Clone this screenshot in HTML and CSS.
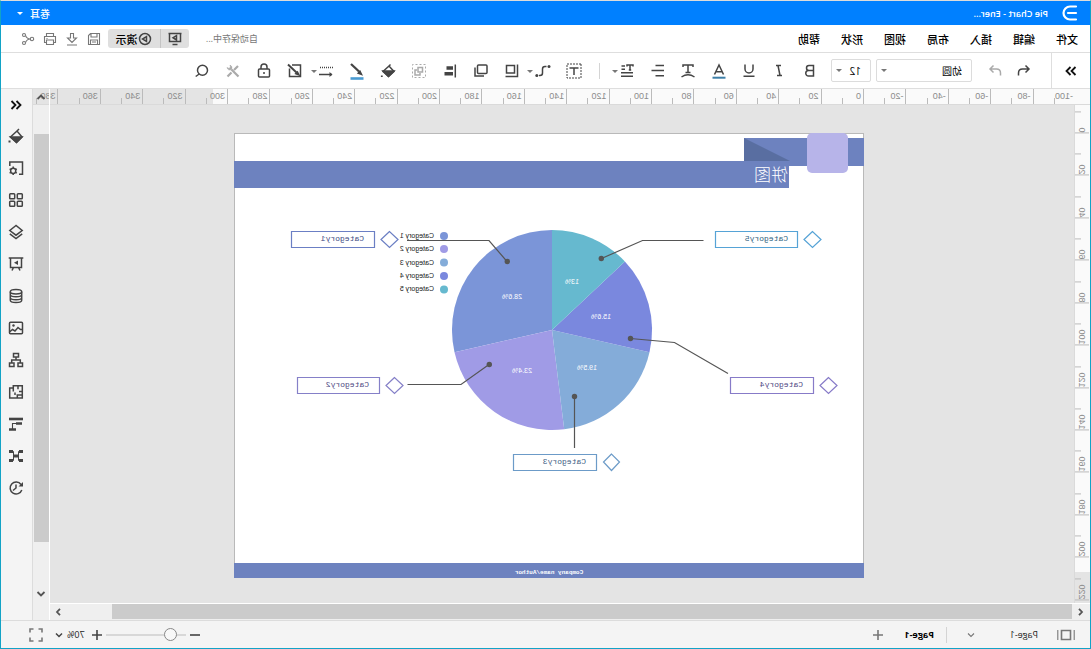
FILE: index.html
```html
<!DOCTYPE html>
<html lang="zh-CN">
<head>
<meta charset="utf-8">
<title>Pie Chart</title>
<link rel="stylesheet" href="styles.css">
</head>
<body>
<div class="app">
  <header class="titlebar">
    <svg class="logo" viewBox="0 0 16 16" width="16" height="16"><path d="M2 1.500h6a6.500 6.500 0 0 1 0 13H2M2 8h8" fill="none" stroke="#fff" stroke-width="2.200" stroke-linecap="round"/></svg>
    <span class="doc-name">Pie Chart - Ener...</span>
    <button class="user">卷耳 <span class="caret caret-light"></span></button>
  </header>

  <div class="menubar">
    <nav class="menus">
      <button>文件</button><button>编辑</button><button>插入</button><button>布局</button><button>视图</button><button>形状</button><button>帮助</button>
    </nav>
    <span class="saving">自动保存中...</span>
    <div class="present">
      <button class="present-screen" aria-label="放映"><svg class="ico" viewBox="0 0 14 14" width="14" height="14"><path d="M0.500 1.500h13M1.500 1.500v8h11v-8M4.500 12.500h5" /><path d="M5.500 3.500v4.500L9 5.700z"/></svg></button>
      <button class="present-play"><svg class="ico" viewBox="0 0 14 14" width="14" height="14"><circle cx="7" cy="7" r="5.500"/><path d="M5.500 4.500v5L9.500 7z"/></svg>演示</button>
    </div>
    <div class="quick">
      <button aria-label="保存"><svg class="ico soft" viewBox="0 0 14 14" width="14" height="14"><path d="M1.500 1.500h9l2 2v9h-11zM4 1.500v3.500h6v-3.500M3.500 12.500V8h7v4.500M5 10h4"/></svg></button>
      <button aria-label="下载"><svg class="ico soft" viewBox="0 0 14 14" width="14" height="14"><path d="M5.500 1.500h3V6h3L7 10.500 2.500 6h3zM2 13h10"/></svg></button>
      <button aria-label="打印"><svg class="ico soft" viewBox="0 0 14 14" width="14" height="14"><path d="M3.500 4.500v-3h7v3M3.500 10.500h-2v-6h11v6h-2M3.500 8h7v4.500h-7zM9.500 6.500h1"/></svg></button>
      <button aria-label="分享"><svg class="ico soft" viewBox="0 0 14 14" width="14" height="14"><circle cx="3" cy="7" r="1.700"/><circle cx="11" cy="3" r="1.500"/><circle cx="11" cy="11" r="1.500"/><path d="M4.700 7Q8 7 9.500 3.500M4.700 7Q8 7 9.500 10.500"/></svg></button>
    </div>
  </div>

  <div class="toolbar">
    <button class="expand" aria-label="展开"><svg class="ico heavy" viewBox="0 0 14 14" width="14" height="14"><path d="M2.500 3l4 4-4 4M7.500 3l4 4-4 4"/></svg></button>
    <button class="tool" aria-label="撤销"><svg class="ico" viewBox="0 0 14 14" width="14" height="14"><path d="M5.500 1.500L2 5l3.500 3.500M2 5h6.500Q12.500 5 12.500 9v2.500"/></svg></button>
    <button class="tool" aria-label="重做"><svg class="ico faint" viewBox="0 0 14 14" width="14" height="14"><path d="M8.500 1.500L12 5 8.500 8.500M12 5H5.500Q1.500 5 1.500 9v2.500"/></svg></button>
    <div class="pick pick-font"><select aria-label="字体"><option>幼圆</option></select><span class="caret"></span></div>
    <div class="pick pick-size"><select aria-label="字号"><option>12</option></select><span class="caret"></span></div>
    <div class="tools-text">
      <button aria-label="粗体"><svg class="ico" viewBox="0 0 16 16" width="16" height="16"><path d="M4.500 2.500h4.500a2.400 2.400 0 0 1 0 5H4.500zM4.500 7.500h5a2.500 2.500 0 0 1 0 5.500h-5z"/></svg></button>
      <button aria-label="斜体"><svg class="ico" viewBox="0 0 16 16" width="16" height="16"><path d="M6 2.500h5M5 12.500h5M9 2.500l-2 10"/></svg></button>
      <button aria-label="下划线"><svg class="ico" viewBox="0 0 16 16" width="16" height="16"><path d="M4 1.500V6a4 4 0 0 0 8 0V1.500M2.500 13.300h11"/></svg></button>
      <button aria-label="字体颜色"><svg class="ico" viewBox="0 0 16 16" width="16" height="16"><path d="M3.500 11.500L8 2l4.500 9.500M5 8.700h6"/><path d="M1.500 14.700h13" stroke="#3d7fa8" stroke-width="2"/></svg></button>
      <button aria-label="弧形文字"><svg class="ico" viewBox="0 0 16 16" width="16" height="16"><path d="M3 4V2h10v2M8 2v7.500M5.500 9.500h5M1.500 14q6.500-4.500 13 0"/></svg></button>
      <button aria-label="对齐"><svg class="ico" viewBox="0 0 16 16" width="16" height="16"><path d="M2 2.500h8.500M2 7.500h12.500M2 12.800h8.500"/></svg></button>
      <button class="has-caret" aria-label="行距"><svg class="ico" viewBox="0 0 16 16" width="16" height="16"><path d="M2 3.500V2h6v1.500M5 2v5M3.800 7h2.400M10 3h3.500M10 6.200h3.500M2 9.700h12M2 13.300h12"/></svg><span class="caret"></span></button>
    </div>
    <span class="rule"></span>
    <div class="tools-shape">
      <button aria-label="文本框"><svg class="ico" viewBox="0 0 16 16" width="16" height="16"><path d="M1 1h14v14H1z" stroke-dasharray="2 1" stroke-width="1"/><path d="M3.500 5h9M8 5v7"/></svg></button>
      <button class="has-caret" aria-label="连接线"><svg class="ico" viewBox="0 0 16 16" width="16" height="16"><path d="M4.500 3.500H6q2.500 0 2.500 2.500v4q0 2.500 2.500 2.500h1"/><circle cx="2" cy="3.500" r="1.500" fill="#444" stroke="none"/><circle cx="14.200" cy="12.500" r="1.500" fill="#444" stroke="none"/></svg><span class="caret"></span></button>
      <button aria-label="阴影"><svg class="ico" viewBox="0 0 16 16" width="16" height="16"><path d="M5.500 2.500h8v7.500h-8zM2.500 1.500v12h12"/></svg></button>
      <button aria-label="图层顺序"><svg class="ico" viewBox="0 0 16 16" width="16" height="16"><rect x="2" y="2" width="9.500" height="8.500" rx="1"/><path d="M14 4.500v8.500H5"/></svg></button>
      <button aria-label="对齐形状"><svg class="ico" viewBox="0 0 16 16" width="16" height="16"><path d="M2.700 1.500v13" stroke-width="1.500"/><path d="M5 5h6.500M5 10.800h8.500" stroke-width="3.500"/></svg></button>
      <button aria-label="组合"><svg class="ico faint" viewBox="0 0 16 16" width="16" height="16"><path d="M1.500 1.500h13v13h-13z" stroke-dasharray="2 2" stroke-width="1"/><path d="M4.500 4.500h4.500v4.500H4.500zM10 7h2v5H7v-2"/></svg></button>
      <button aria-label="填充"><svg class="ico" viewBox="0 0 16 16" width="16" height="16"><path d="M7 3l6 5.500-5.500 5L2 8.500zM5.500 1.500l2 2"/><path d="M2 8h11l-5.500 5.500z" fill="#444"/><path d="M14.200 12.500v1.500" stroke-width="1.800"/></svg></button>
      <button aria-label="线条颜色"><svg class="ico" viewBox="0 0 16 18" width="16" height="18"><path d="M14 2L6 9.500" stroke-width="2.300"/><path d="M3.500 12.300l1.500-3 1.800 1.800z" fill="#444"/><path d="M1.500 16.500h13" stroke="#4a9cd3" stroke-width="2.600"/></svg></button>
      <button class="has-caret" aria-label="线型"><svg class="ico" viewBox="0 0 16 16" width="16" height="16"><path d="M1 4.500h14" stroke-dasharray="1 1"/><path d="M15 11.500H2"/><path d="M4.500 9L1.500 11.500l3 2.500z" fill="#444" stroke="none"/></svg><span class="caret"></span></button>
      <button aria-label="编辑"><svg class="ico" viewBox="0 0 16 16" width="16" height="16"><path d="M11 2H2.500v11.500H13.500V5.500"/><path d="M15 1.500L6.500 9.500" stroke-width="2"/><path d="M4 12l1.500-3L7.300 10.800z" fill="#444"/></svg></button>
      <button aria-label="锁定"><svg class="ico" viewBox="0 0 16 16" width="16" height="16"><rect x="2.500" y="6" width="11" height="8" rx="1"/><path d="M5 6V4a3 3 0 0 1 6 0v2M8 9v2"/></svg></button>
      <button aria-label="工具"><svg class="ico faint" viewBox="0 0 16 16" width="16" height="16"><path d="M3 3l4 4M9.500 9.500l4 4" stroke-width="2.200"/><path d="M2.500 13.500l7-7" stroke-width="2.200"/><path d="M11 2q-3 1.500-1.500 4.500 3.500 1.500 4.500-2l-2 1-1.500-1.500z" fill="#aaa" stroke-width=".6"/></svg></button>
      <button aria-label="查找"><svg class="ico" viewBox="0 0 16 16" width="16" height="16"><circle cx="7.500" cy="7.200" r="5"/><path d="M10.800 11l3.500 2.500"/></svg></button>
    </div>
  </div>

  <main class="workspace">
    <div class="ruler-h">
      <div class="scale-h">
        <span>-100</span><span>-80</span><span>-60</span><span>-40</span><span>-20</span><span>0</span><span>20</span><span>40</span><span>60</span><span>80</span><span>100</span><span>120</span><span>140</span><span>160</span><span>180</span><span>200</span><span>220</span><span>240</span><span>260</span><span>280</span><span>300</span><span>320</span><span>340</span><span>360</span><span>380</span>
      </div>
    </div>
    <div class="ruler-v">
      <div class="scale-v">
        <span>0</span><span>20</span><span>40</span><span>60</span><span>80</span><span>100</span><span>120</span><span>140</span><span>160</span><span>180</span><span>200</span><span>220</span>
      </div>
    </div>

    <section class="canvas">
      <svg class="page" viewBox="227 133 630 446" width="630" height="446">
        <rect x="227.500" y="133.500" width="629" height="444" fill="#fff" stroke="#b9b9b9"/>
        <path d="M227 138h120v23h510v27H302v-22h-75z" fill="#6d82bf"/>
        <path d="M347 138v23h-46z" fill="#596ea1"/>
        <rect x="243" y="133" width="41" height="40" rx="5" fill="#b7b4e9"/>
        <text class="t-title" x="303" y="181">饼图</text>

        <path d="M539 330V230A100 100 0 0 1 636.500 352.300z" fill="#7b95d8"/>
        <path d="M539 330L636.500 352.300A100 100 0 0 1 526.800 429.300z" fill="#a09be6"/>
        <path d="M539 330L526.800 429.300A100 100 0 0 1 441.500 352.300z" fill="#84acd9"/>
        <path d="M539 330L441.500 352.300A100 100 0 0 1 466.100 261.500z" fill="#7a88de"/>
        <path d="M539 330L466.100 261.500A100 100 0 0 1 539 230z" fill="#66b9cf"/>

        <g class="t-value">
          <text x="579" y="299">28.6%</text>
          <text x="569" y="373">23.4%</text>
          <text x="504" y="370">19.5%</text>
          <text x="490" y="319">15.6%</text>
          <text x="519" y="284">13%</text>
        </g>

        <circle cx="647" cy="236" r="4" fill="#7b95d8"/>
        <circle cx="647" cy="249" r="4" fill="#a09be6"/>
        <circle cx="647" cy="262.500" r="4" fill="#84acd9"/>
        <circle cx="647" cy="276" r="4" fill="#7a88de"/>
        <circle cx="647" cy="289.500" r="4" fill="#66b9cf"/>
        <g class="t-legend">
          <text x="657" y="238">Category 1</text>
          <text x="657" y="251">Category 2</text>
          <text x="657" y="265">Category 3</text>
          <text x="657" y="278">Category 4</text>
          <text x="657" y="291">Category 5</text>
        </g>

        <g fill="none" stroke="#555" stroke-width="1.200">
          <path d="M684 240.500H602L584 261.500"/>
          <path d="M683.500 384.500H630L602 364.500"/>
          <path d="M516.500 396.500V448"/>
          <path d="M460.500 338.500L416.500 342.500L363 373.500"/>
          <path d="M489.500 258.500L448.500 240.500H387.500"/>
        </g>
        <g fill="#555">
          <circle cx="583.700" cy="261.500" r="2.700"/>
          <circle cx="601.700" cy="364.500" r="2.700"/>
          <circle cx="516.500" cy="396.500" r="2.700"/>
          <circle cx="460.500" cy="338.500" r="2.700"/>
          <circle cx="489.700" cy="258.500" r="2.700"/>
        </g>

        <g fill="none" stroke-width="1.200">
          <path d="M716.500 231.500h83v16h-83zM701.500 231.500l8.500 8-8.500 8-8.500-8z" stroke="#6b7fc4"/>
          <path d="M711.500 377.500h82v16h-82zM696.500 377.500l8.500 8-8.500 8-8.500-8z" stroke="#8580c8"/>
          <path d="M494.500 454.500h83v16h-83zM479.500 454l8 8-8 8.500-8-8.500z" stroke="#6c9bc8"/>
          <path d="M277.500 377.500h83v16h-83zM262.500 377.500l8.500 8-8.500 8-8.500-8z" stroke="#877bc8"/>
          <path d="M293.500 231.500h82v16h-82zM278.500 231.500l8.500 8-8.500 8-8.500-8z" stroke="#56a3d6"/>
        </g>
        <g class="t-box">
          <text x="727" y="241" fill="#3d4a84">Category1</text>
          <text x="722" y="387" fill="#4f4a84">Category2</text>
          <text x="505" y="464" fill="#3f6286">Category3</text>
          <text x="288" y="387" fill="#4f4784">Category4</text>
          <text x="303" y="241" fill="#2f6381">Category5</text>
        </g>

        <rect x="227" y="563" width="630" height="15" fill="#6d82bf"/>
        <text class="t-footer" x="542" y="574">Company name/Author</text>
      </svg>
    </section>

    <div class="scroll-v">
      <button aria-label="向上"><svg class="ico arrow" viewBox="0 0 10 10" width="10" height="10"><path d="M1.500 7L5 3.500 8.500 7"/></svg></button>
      <div class="track-v"><div class="thumb-v"></div></div>
      <button aria-label="向下"><svg class="ico arrow" viewBox="0 0 10 10" width="10" height="10"><path d="M1.500 3L5 6.500 8.500 3"/></svg></button>
    </div>
    <div class="scroll-h">
      <button aria-label="向左"><svg class="ico arrow" viewBox="0 0 10 10" width="10" height="10"><path d="M7 1.800L4 5l3 3.200"/></svg></button>
      <div class="track-h"><div class="thumb-h"></div></div>
      <button aria-label="向右"><svg class="ico arrow" viewBox="0 0 10 10" width="10" height="10"><path d="M3 1.800L6 5 3 8.200"/></svg></button>
    </div>

    <aside class="side">
      <button aria-label="收起"><svg class="ico heavy" viewBox="0 0 16 16" width="16" height="16"><path d="M7.500 4l-4 4 4 4M12.500 4l-4 4 4 4"/></svg></button>
      <button aria-label="填充"><svg class="ico" viewBox="0 0 16 16" width="16" height="16"><path d="M7 3l6.500 6-6 5.500L2 9zM5 1l2.500 2.500"/><path d="M2 9h11.500l-6 5.500z" fill="#444"/><path d="M14.500 12.500v2" stroke-width="2"/></svg></button>
      <button aria-label="属性"><svg class="ico" viewBox="0 0 16 16" width="16" height="16"><path d="M5 14.200H1.500V2h12.700v4"/><circle cx="10.800" cy="10.800" r="2.600"/><path d="M10.800 6.500v1.500M10.800 13.300v1.700M7.200 8.800l1.300.8M13 12.300l1.400.8M7.200 13.100l1.300-.8M13 9.600l1.400-.8"/></svg></button>
      <button aria-label="符号库"><svg class="ico" viewBox="0 0 16 16" width="16" height="16"><rect x="1.700" y="1.700" width="5" height="5" rx=".8"/><rect x="9.300" y="1.700" width="5" height="5" rx=".8"/><rect x="1.700" y="9.300" width="5" height="5" rx=".8"/><rect x="9.300" y="9.300" width="5" height="5" rx=".8"/></svg></button>
      <button aria-label="图层"><svg class="ico" viewBox="0 0 16 16" width="16" height="16"><path d="M8 1.500l6.200 5L8 11.200 1.800 6.500zM1.800 9.800L8 14.500l6.200-4.700"/></svg></button>
      <button aria-label="演示页"><svg class="ico" viewBox="0 0 16 16" width="16" height="16"><path d="M.7 2h14.600M2.500 2v9.500h11V2M5.500 11.500L4 14.500M10.500 11.500l1.500 3"/><path d="M6 4.500v4.500L10 6.700z" fill="#444" stroke="none"/></svg></button>
      <button aria-label="数据"><svg class="ico" viewBox="0 0 16 16" width="16" height="16"><ellipse cx="8" cy="3.800" rx="5.700" ry="2.200"/><path d="M2.300 3.800v8.500c0 3 11.400 3 11.400 0V3.800M2.300 6.500c0 3 11.400 3 11.400 0M2.300 9.500c0 3 11.400 3 11.400 0"/></svg></button>
      <button aria-label="图片"><svg class="ico" viewBox="0 0 16 16" width="16" height="16"><rect x="1.500" y="2.200" width="13" height="11.600" rx="1"/><path d="M1.500 9.500h2l2.500-2 3 3.500 2.500-1.500 3 2.500"/><circle cx="10.500" cy="5.500" r="1.200" fill="#444" stroke="none"/></svg></button>
      <button aria-label="组织结构"><svg class="ico" viewBox="0 0 16 16" width="16" height="16"><path d="M5.500 1.500h5v3.500h-5zM1.500 11h4.500v3.500H1.500zM10 11h4.500v3.500H10zM8 5v3M3.700 11V8h8.600v3"/></svg></button>
      <button aria-label="平面图"><svg class="ico" viewBox="0 0 16 16" width="16" height="16"><path d="M1.700 1.700h9v2.300h3.600v10H1.700zM6 1.700v3.500M1.700 7.500H5M10.700 4v3.500M9 8.500V11M1.700 11h5v3"/></svg></button>
      <button aria-label="甘特图"><svg class="ico" viewBox="0 0 16 16" width="16" height="16"><path d="M1 3h14" stroke-width="2.600"/><path d="M2 7.500h6M8 13.500h7" stroke-width="2.300"/><path d="M8 7.500h3.500v6" stroke-width="1.100"/></svg></button>
      <button aria-label="思维导图"><svg class="ico" viewBox="0 0 16 16" width="16" height="16"><path d="M3 3.500h2.500v4.500h5V3.500H13M3 12.500h2.500V8M10.500 8v4.500H13" stroke-width="1"/><path d="M1 3.500h4M11 3.500h4M1 12.500h4M11 12.500h4M6 8h4" stroke-width="2.800"/></svg></button>
      <button aria-label="历史"><svg class="ico" viewBox="0 0 16 16" width="16" height="16"><path d="M3 4.500a6 6 0 1 1-.8 5.500M8 4.500V8l3 2.500"/><path d="M1 2v4.500h4.500z" fill="#444" stroke="none"/></svg></button>
    </aside>
  </main>

  <footer class="status">
    <button class="pages-icon" aria-label="页面列表"><svg class="ico soft" viewBox="0 0 18 12" width="18" height="12"><path d="M.8 1v10M17.200 1v10"/><path d="M4.500 1.500h9v9h-9z" stroke-width="1.600"/></svg></button>
    <button class="page-select">Page-1 <svg class="ico soft" viewBox="0 0 8 8" width="8" height="8"><path d="M1 2.500l3 3 3-3"/></svg></button>
    <button class="page-tab">Page-1</button>
    <button class="add-page" aria-label="添加页面"><svg class="ico soft" viewBox="0 0 12 12" width="12" height="12"><path d="M1 6h10M6 1v10" stroke-width="1.600"/></svg></button>
    <div class="zoom">
      <button aria-label="缩小"><svg class="ico" viewBox="0 0 12 12" width="12" height="12"><path d="M1 6h10" stroke-width="1.600"/></svg></button>
      <input type="range" min="0" max="100" value="13" aria-label="缩放">
      <button aria-label="放大"><svg class="ico" viewBox="0 0 12 12" width="12" height="12"><path d="M1 6h10M6 1v10" stroke-width="1.600"/></svg></button>
      <button class="percent">70% <svg class="ico" viewBox="0 0 8 8" width="8" height="8"><path d="M1 2.500l3 3 3-3"/></svg></button>
      <button class="full" aria-label="全屏"><svg class="ico soft" viewBox="0 0 14 14" width="14" height="14"><path d="M1 4.500V1h3.500M9.500 1H13v3.500M13 9.500V13H9.500M4.500 13H1V9.500" stroke-width="1.600"/></svg></button>
    </div>
  </footer>
</div>
</body>
</html>
```
FILE: styles.css
```css
* { box-sizing: border-box; }

html, body { height: 100%; margin: 0; }

body {
  font-family: "Open Sans", "Noto Sans CJK SC", sans-serif;
  font-size: 10px;
  color: #222;
  background: #e6e6e6;
}

button {
  display: flex;
  align-items: center;
  justify-content: center;
  padding: 0;
  border: 0;
  background: none;
  font: inherit;
  color: inherit;
}

/* The whole window is shown flipped left to right. */
.app {
  display: flex;
  flex-direction: column;
  min-height: 100vh;
  border: 1px solid #12a3c6;
  border-top-color: #dcdcdc;
  background: #fff;
  transform: scaleX(-1);
}

.ico { fill: none; stroke: #444; stroke-width: 1.5; flex: none; }
.ico.soft { stroke: #777; stroke-width: 1.1; }
.ico.faint { stroke: #aaa; }
.ico.heavy { stroke: #111; stroke-width: 1.8; }
.ico.arrow { stroke: #555; stroke-width: 1.8; }

.caret {
  width: 0;
  height: 0;
  border: 3px solid transparent;
  border-top-color: #777;
  border-bottom: 0;
}
.caret-light { border-top-color: #fff; }

/* title bar */
.titlebar {
  display: flex;
  align-items: center;
  height: 24px;
  padding: 0 16px 0 12px;
  background: #0080ff;
  color: #fff;
}
.doc-name { flex: 1; padding-left: 14px; font-weight: 600; font-size: 9px; }
.user { gap: 7px; font-weight: 500; }

/* menu bar */
.menubar {
  display: flex;
  align-items: center;
  height: 28px;
  padding-right: 16px;
  border-bottom: 1px solid #dedede;
}
.menus { display: flex; flex: 1; gap: 21px; padding-left: 12px; font-size: 11px; font-weight: 500; color: #000; }
.saving { font-size: 9px; color: #777; }
.present { display: flex; margin: 0 3px 0 17px; border-radius: 3px; background: #dfdfdf; overflow: hidden; }
.present button { height: 19px; }
.present-screen { width: 29px; border-right: 1px solid #c4c4c4; }
.present-play { width: 52px; gap: 1px; font-size: 11px; font-weight: 500; color: #000; }
.quick { display: flex; }
.quick button { width: 22px; height: 20px; }

/* toolbar */
.toolbar {
  display: flex;
  align-items: center;
  height: 36px;
  border-bottom: 1px solid #dedede;
}
.expand { width: 39px; height: 35px; border-right: 1px solid #dedede; }
.tool { width: 28px; height: 24px; margin-left: 13px; }
.tool + .tool { margin-left: 1px; }
.pick {
  display: flex;
  align-items: center;
  height: 23px;
  padding-right: 4px;
  border: 1px solid #dcdcdc;
  border-radius: 2px;
}
.pick select {
  flex: 1;
  min-width: 0;
  border: 0;
  appearance: none;
  background: none;
  font: inherit;
  color: #000;
}
.pick-font { width: 96px; margin-left: 9px; padding-left: 9px; }
.pick-size { width: 40px; margin: 0 6px 0 5px; padding-left: 9px; }
.tools-text { display: grid; grid-template-columns: repeat(7, 1fr); width: 213px; }
.tools-shape { display: grid; grid-template-columns: repeat(13, 1fr); width: 402px; }
.tools-text button, .tools-shape button { height: 24px; }
.has-caret { position: relative; }
.has-caret .caret { position: absolute; right: 0; top: 11px; }
.rule { width: 1px; height: 16px; margin: 0 10px 0 12px; background: #d4d4d4; }

/* workspace */
.workspace {
  display: grid;
  flex: 1;
  grid-template-columns: 16px 1fr 17px 32px;
  grid-template-rows: 16px 1fr 17px;
}
.ruler-h {
  grid-area: 1 / 1 / 2 / 4;
  overflow: hidden;
  border-bottom: 1px solid #dadada;
  background: linear-gradient(to right, #fafafa 877px, #e4e4e4 877px);
}
.scale-h {
  display: grid;
  grid-template-columns: repeat(25, 1fr);
  width: 1060px;
  margin-left: 14px;
}
.scale-h span, .scale-v span {
  font-family: "Liberation Sans", Arial, sans-serif;
  font-size: 9px;
  line-height: 14px;
  color: #8c8c8c;
}
.scale-h span {
  height: 15px;
  padding-left: 2px;
  border-left: 1px solid #bbb;
  background: linear-gradient(#bbb, #bbb) 50% 100% / 1px 6px no-repeat;
}
.scale-h span:first-child { border-left-color: transparent; }
.ruler-v {
  grid-area: 2 / 1 / 4 / 2;
  overflow: hidden;
  height: 498px;
  padding-left: 1px;
  border-right: 1px solid #dadada;
  background: linear-gradient(#fafafa 467px, #e4e4e4 467px);
}
.scale-v {
  display: grid;
  grid-template-rows: repeat(12, 1fr);
  height: 509px;
  margin-top: -14px;
}
.scale-v span {
  border-top: 1px solid #bbb;
  background: linear-gradient(#bbb, #bbb) 0 50% / 6px 1px no-repeat;
  writing-mode: vertical-rl;
  transform: rotate(180deg);
}
.canvas { grid-area: 2 / 2 / 3 / 3; overflow: hidden; padding: 28px 0 0 210px; background: #e4e4e4; }
.page { display: block; }

.t-title { font: 300 17px "Noto Sans CJK SC", sans-serif; fill: #fff; }
.t-value { font: 7px "Liberation Sans", sans-serif; fill: #fff; text-anchor: middle; }
.t-legend { font: 7px "Liberation Sans", sans-serif; fill: #222; }
.t-box { font: 8px "Liberation Mono", monospace; }
.t-footer { font: bold 6px "Liberation Mono", monospace; fill: #fff; text-anchor: middle; }

.scroll-v {
  grid-area: 1 / 3 / 4 / 4;
  display: flex;
  flex-direction: column;
  border-left: 1px solid #fff;
}
.scroll-v button { height: 16px; }
.scroll-v button:last-child { height: 52px; background: #efefef; }
.track-v { flex: 1; padding: 29px 1px 0 0; background: #efefef; }
.thumb-v { height: 94%; background: #cbcbcb; }
.scroll-h {
  grid-area: 3 / 1 / 4 / 3;
  display: flex;
  border-top: 1px solid #fff;
  background: #efefef;
}
.scroll-h button { width: 17px; }
.track-h { flex: 1; padding: 0 0 1px 1px; }
.thumb-h { width: 95.5%; height: 100%; background: #cbcbcb; }

.side {
  grid-area: 1 / 4 / 4 / 5;
  border-left: 1px solid #dcdcdc;
  background: #f4f4f4;
}
.side button { width: 100%; height: 32px; }
.side button:first-child { height: 31px; }

/* status bar */
.status {
  display: flex;
  align-items: center;
  height: 28px;
  padding: 0 28px 0 15px;
  border-top: 1px solid #dcdcdc;
  background: #f4f4f4;
}
.page-select { width: 92px; height: 16px; margin-left: 19px; padding-right: 20px; justify-content: space-between; border-right: 1px solid #d4d4d4; font-size: 9px; }
.page-tab { padding: 0 20px 0 12px; font-size: 9px; font-weight: 700; color: #000; }
.zoom { display: flex; align-items: center; margin-left: auto; }
.percent { gap: 4px; margin-left: 6px; font-size: 9px; }
.full { margin-left: 12px; }

.zoom input {
  width: 80px;
  height: 14px;
  margin: 0 3px;
  appearance: none;
  background: linear-gradient(#d8d8d8, #d8d8d8) 0 50% / 100% 2px no-repeat;
}
.zoom input::-webkit-slider-thumb {
  appearance: none;
  width: 13px;
  height: 13px;
  border: 1px solid #888;
  border-radius: 50%;
  background: #f8f8f8;
}
```
